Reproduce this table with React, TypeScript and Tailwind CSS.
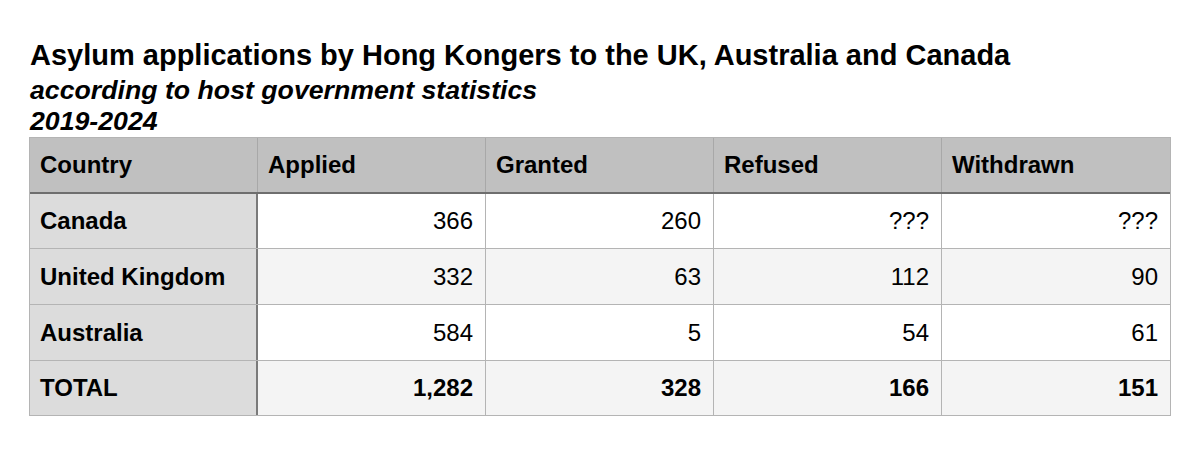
import React from "react";

const rows = [
  { name: "Canada", vals: ["366", "260", "???", "???"], bg: "bg-white", bold: false, h: "h-[55px]" },
  { name: "United Kingdom", vals: ["332", "63", "112", "90"], bg: "bg-[#f4f4f4]", bold: false, h: "h-[56px]" },
  { name: "Australia", vals: ["584", "5", "54", "61"], bg: "bg-white", bold: false, h: "h-[56px]" },
  { name: "TOTAL", vals: ["1,282", "328", "166", "151"], bg: "bg-[#f4f4f4]", bold: true, h: "h-[54px]" },
];

export default function App() {
  return (
    <div
      className="w-[1200px] h-[464px] bg-white text-black pl-[29px] pt-[38px]"
      style={{ fontFamily: '"Liberation Sans", Arial, sans-serif' }}
    >
      <div className="pl-[1px]">
        <h1 className="text-[29px] font-bold leading-[34px]">
          Asylum applications by Hong Kongers to the UK, Australia and Canada
        </h1>
        <div className="text-[26.7px] font-bold italic leading-[31px] mt-[3px]">
          according to host government statistics
        </div>
        <div className="text-[26.7px] font-bold italic leading-[31px]">2019-2024</div>
      </div>
      <div className="w-[1142px] border border-[#b4b4b4]">
        <div className="grid grid-cols-[228px_228px_228px_228px_1fr] h-[56px] bg-[#c0c0c0] border-b-2 border-[#6e6e6e] text-[24px] font-bold">
          {["Country", "Applied", "Granted", "Refused", "Withdrawn"].map((h, i) => (
            <div
              key={h}
              className={`flex items-center pl-[10px] ${i < 4 ? "border-r border-[#a8a8a8]" : ""}`}
            >
              {h}
            </div>
          ))}
        </div>
        {rows.map((r, ri) => (
          <div
            key={r.name}
            className={`grid grid-cols-[228px_228px_228px_228px_1fr] ${r.h} text-[24px] ${r.bg} ${ri < rows.length - 1 ? "border-b border-[#b4b4b4]" : ""}`}
          >
            <div className="flex items-center pl-[10px] bg-[#dcdcdc] border-r-2 border-[#7a7a7a] font-bold">
              {r.name}
            </div>
            {r.vals.map((v, i) => (
              <div
                key={i}
                className={`flex items-center justify-end pr-[12px] ${r.bold ? "font-bold" : ""} ${i < 3 ? "border-r border-[#b4b4b4]" : ""}`}
              >
                {v}
              </div>
            ))}
          </div>
        ))}
      </div>
    </div>
  );
}
